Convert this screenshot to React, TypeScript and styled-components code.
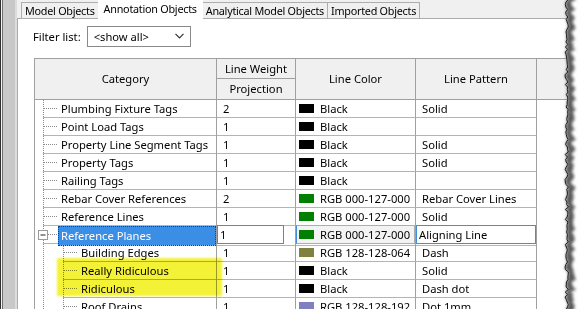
import React from 'react';
import styled, { createGlobalStyle, css } from 'styled-components';

const FONT = `"Noto Sans", "Segoe UI", sans-serif`;
const FS = '11.2px';

const GlobalStyle = createGlobalStyle`
  html, body { margin: 0; padding: 0; background: #fff; }
  body {
    width: 587px; height: 309px; overflow: hidden;
    font-family: ${FONT}; font-size: ${FS}; color: #000;
  }
  #root { width: 587px; height: 309px; }
`;

const Screen = styled.div`
  position: relative;
  display: flex;
  width: 587px;
  height: 309px;
  overflow: hidden;
  background: #fff;
`;

const WindowEdge = styled.div`
  flex: 0 0 17px;
  background: linear-gradient(
    to right,
    #2e2e2e 0 1px,
    #f2f2f2 1px 2px,
    #6e6e6e 2px 3px,
    #c8c8c8 3px 15px,
    #dcdcdc 15px 17px
  );
`;

const Dialog = styled.div`
  flex: 1;
  min-width: 0;
  display: flex;
  flex-direction: column;
  background: #f0f0f0;
`;

const TabStrip = styled.div`
  display: flex;
  align-items: flex-end;
  height: 18px;
  padding-left: 5px;
  position: relative;
  z-index: 1;
`;

const Tab = styled.div<{ $active?: boolean }>`
  box-sizing: border-box;
  height: 16px;
  border: 1px solid #adadad;
  border-bottom: none;
  margin-left: -1px;
  background: #f0f0f0;
  font-size: 10.8px;
  letter-spacing: -0.25px;
  line-height: 15px;
  padding: 0 3px;
  white-space: nowrap;
  ${(p) =>
    p.$active &&
    css`
      height: 19px;
      margin-bottom: -1px;
      border-color: transparent;
      background: #fff;
      line-height: 16px;
      padding: 0 5px;
      position: relative;
      z-index: 2;
    `}
`;

const Panel = styled.div`
  flex: 1;
  background: #fff;
  border-top: 1px solid #adadad;
  border-left: 1px solid #adadad;
  display: flex;
  flex-direction: column;
  padding-top: 7px;
`;

const FilterRow = styled.div`
  display: flex;
  align-items: center;
  gap: 6px;
  padding-left: 15px;
  height: 21px;
`;

const FilterLabel = styled.span`
  padding-bottom: 1px;
`;

const SelectBox = styled.div`
  box-sizing: border-box;
  width: 104px;
  height: 21px;
  border: 1px solid #8a8a8a;
  display: flex;
  align-items: center;
  justify-content: space-between;
  padding: 0 6px 1px 6px;
  background: #fff;
`;

const Table = styled.div`
  margin: 11px 0 0 16px;
  border-top: 1px solid #a0a0a0;
  border-left: 1px solid #a0a0a0;
  display: flex;
  flex-direction: column;
`;

const COLS = '182px 79px 120px 121px 1fr';

const HeaderGrid = styled.div`
  display: grid;
  grid-template-columns: ${COLS};
  grid-template-rows: 20px 21px;
  background: #f0f0f0;
`;

const HeaderCell = styled.div<{ $span?: boolean; $last?: boolean }>`
  box-sizing: border-box;
  display: flex;
  align-items: center;
  justify-content: center;
  border-right: ${(p) => (p.$last ? 'none' : '1px solid #a0a0a0')};
  border-bottom: 1px solid #a0a0a0;
  grid-row: ${(p) => (p.$span ? 'span 2' : 'auto')};
  white-space: nowrap;
  padding-bottom: 1px;
`;

const Row = styled.div`
  display: grid;
  grid-template-columns: ${COLS};
  height: 18px;
`;

const CategoryCell = styled.div`
  display: flex;
  border-right: 1px solid #a0a0a0;
  min-width: 0;
`;

const TreeGuide = styled.svg`
  flex: 0 0 auto;
  display: block;
`;

const CategoryLabel = styled.div<{ $selected?: boolean }>`
  flex: 1;
  box-sizing: border-box;
  display: flex;
  align-items: center;
  padding-left: 3px;
  padding-bottom: 1px;
  border-bottom: 1px solid #b4b4b4;
  white-space: nowrap;
  overflow: hidden;
  ${(p) =>
    p.$selected &&
    css`
      background: #3a8ee6;
      color: #fff;
      outline: 1px dotted #1a3f75;
      outline-offset: -1px;
    `}
`;

const DataCell = styled.div<{ $blank?: boolean }>`
  box-sizing: border-box;
  display: flex;
  align-items: center;
  padding-bottom: 1px;
  border-right: ${(p) => (p.$blank ? 'none' : '1px solid #a0a0a0')};
  border-bottom: ${(p) => (p.$blank ? 'none' : '1px solid #b4b4b4')};
  white-space: nowrap;
  min-width: 0;
`;

const PlainText = styled.span`
  padding-left: 6px;
`;

const EditBox = styled.div<{ $trim?: number }>`
  box-sizing: border-box;
  align-self: flex-start;
  height: 19px;
  margin-top: -1px;
  margin-right: ${(p) => p.$trim ?? 0}px;
  flex: 1;
  border: 1px solid #3f8fe0;
  background: #fff;
  display: flex;
  align-items: center;
  padding: 0 0 1px 2px;
  position: relative;
  z-index: 1;
`;

const ColorWrap = styled.div<{ $button?: boolean }>`
  flex: 1;
  display: flex;
  align-items: center;
  gap: 6px;
  padding-left: 3px;
  height: 100%;
  box-sizing: border-box;
  ${(p) =>
    p.$button &&
    css`
      align-self: flex-start;
      height: 19px;
      margin-top: -1px;
      padding-left: 2px;
      padding-bottom: 1px;
      border: 1px solid #adadad;
      border-left-color: #3f8fe0;
      background: #f3f3f3;
    `}
`;

const Swatch = styled.span<{ $c: string }>`
  width: 15px;
  height: 9px;
  margin-top: 1px;
  background: ${(p) => p.$c};
  flex: 0 0 auto;
`;

const Highlighter = styled.div`
  position: absolute;
  left: 57px;
  top: 258px;
  width: 165px;
  height: 38px;
  background: #f4f236;
  mix-blend-mode: multiply;
  filter: blur(0.8px);
  pointer-events: none;
  z-index: 5;
`;

const TornEdge = styled.svg`
  position: absolute;
  right: 0;
  top: 0;
  z-index: 10;
`;

type RowData = {
  name: string;
  level: 0 | 1;
  weight: string;
  color: string;
  pattern: string;
  selected?: boolean;
  expander?: boolean;
};

const COLOR: Record<string, string> = {
  Black: '#000000',
  'RGB 000-127-000': '#007f00',
  'RGB 128-128-064': '#808040',
  'RGB 128-128-192': '#8080c0',
};

const rows: RowData[] = [
  { name: 'Plumbing Fixture Tags', level: 0, weight: '2', color: 'Black', pattern: 'Solid' },
  { name: 'Point Load Tags', level: 0, weight: '1', color: 'Black', pattern: '' },
  { name: 'Property Line Segment Tags', level: 0, weight: '1', color: 'Black', pattern: 'Solid' },
  { name: 'Property Tags', level: 0, weight: '1', color: 'Black', pattern: 'Solid' },
  { name: 'Railing Tags', level: 0, weight: '1', color: 'Black', pattern: '' },
  { name: 'Rebar Cover References', level: 0, weight: '2', color: 'RGB 000-127-000', pattern: 'Rebar Cover Lines' },
  { name: 'Reference Lines', level: 0, weight: '1', color: 'RGB 000-127-000', pattern: 'Solid' },
  { name: 'Reference Planes', level: 0, weight: '1', color: 'RGB 000-127-000', pattern: 'Aligning Line', selected: true, expander: true },
  { name: 'Building Edges', level: 1, weight: '1', color: 'RGB 128-128-064', pattern: 'Dash' },
  { name: 'Really Ridiculous', level: 1, weight: '1', color: 'Black', pattern: 'Solid' },
  { name: 'Ridiculous', level: 1, weight: '1', color: 'Black', pattern: 'Dash dot' },
  { name: 'Roof Drains', level: 1, weight: '1', color: 'RGB 128-128-192', pattern: 'Dot 1mm' },
];

const DOT = '#8a8a8a';

function Guide({ level, expander }: { level: 0 | 1; expander?: boolean }) {
  const w = level === 0 ? 23 : 43;
  return (
    <TreeGuide width={w} height={18} viewBox={`0 0 ${w} 18`}>
      <line x1={8.5} y1={0} x2={8.5} y2={18} stroke={DOT} strokeDasharray="1 1" />
      {level === 1 && <line x1={28.5} y1={0} x2={28.5} y2={18} stroke={DOT} strokeDasharray="1 1" />}
      <line x1={level === 0 ? 9 : 29} y1={8.5} x2={w} y2={8.5} stroke={DOT} strokeDasharray="1 1" />
      <line x1={level === 0 ? 8 : 28} y1={17.5} x2={w} y2={17.5} stroke="#b4b4b4" />
      {expander && (
        <g>
          <rect x={3.5} y={4.5} width={9} height={9} fill="#fff" stroke="#9a9a9a" />
          <line x1={5.5} y1={9} x2={10.5} y2={9} stroke="#222" />
        </g>
      )}
    </TreeGuide>
  );
}

const edge = (() => {
  let s = 11;
  const rnd = () => {
    s = (s * 9301 + 49297) % 233280;
    return s / 233280;
  };
  const pts: [number, number][] = [];
  for (let y = -3; y <= 314; y += 2.5) pts.push([10 + rnd() * 3.5, y]);
  return pts;
})();

function Torn() {
  const line = edge.map(([x, y]) => `${x.toFixed(1)},${y}`).join(' ');
  const shadow =
    line +
    ' ' +
    [...edge]
      .reverse()
      .map(([x, y], i) => `${(x + 5 + ((i * 7) % 4)).toFixed(1)},${y}`)
      .join(' ');
  return (
    <TornEdge width={32} height={309} viewBox="0 0 32 309">
      <defs>
        <filter id="sh" x="-50%" y="-5%" width="200%" height="110%">
          <feGaussianBlur stdDeviation="1.6" />
        </filter>
      </defs>
      <polygon points={`${line} 40,314 40,-3`} fill="#fff" />
      <polygon points={shadow} fill="#5a5a5a" filter="url(#sh)" />
      <polyline points={line} fill="none" stroke="#1e1e1e" strokeWidth={1} />
    </TornEdge>
  );
}

export default function App() {
  return (
    <>
      <GlobalStyle />
      <Screen>
        <WindowEdge />
        <Dialog>
          <TabStrip>
            <Tab>Model Objects</Tab>
            <Tab $active>Annotation Objects</Tab>
            <Tab>Analytical Model Objects</Tab>
            <Tab>Imported Objects</Tab>
          </TabStrip>
          <Panel>
            <FilterRow>
              <FilterLabel>Filter list:</FilterLabel>
              <SelectBox>
                <span>&lt;show all&gt;</span>
                <svg width="9" height="6" viewBox="0 0 9 6">
                  <polyline points="0.5,0.8 4.5,4.8 8.5,0.8" fill="none" stroke="#333" strokeWidth="1.2" />
                </svg>
              </SelectBox>
            </FilterRow>
            <Table>
              <HeaderGrid>
                <HeaderCell $span>Category</HeaderCell>
                <HeaderCell>Line Weight</HeaderCell>
                <HeaderCell $span>Line Color</HeaderCell>
                <HeaderCell $span>Line Pattern</HeaderCell>
                <HeaderCell $span $last />
                <HeaderCell>Projection</HeaderCell>
              </HeaderGrid>
              {rows.map((r) => (
                <Row key={r.name}>
                  <CategoryCell>
                    <Guide level={r.level} expander={r.expander} />
                    <CategoryLabel $selected={r.selected}>{r.name}</CategoryLabel>
                  </CategoryCell>
                  <DataCell>
                    {r.selected ? <EditBox $trim={11}>{r.weight}</EditBox> : <PlainText>{r.weight}</PlainText>}
                  </DataCell>
                  <DataCell>
                    <ColorWrap $button={r.selected}>
                      <Swatch $c={COLOR[r.color]} />
                      <span>{r.color}</span>
                    </ColorWrap>
                  </DataCell>
                  <DataCell>
                    {r.selected ? <EditBox>{r.pattern}</EditBox> : <PlainText>{r.pattern}</PlainText>}
                  </DataCell>
                  <DataCell $blank />
                </Row>
              ))}
            </Table>
          </Panel>
        </Dialog>
        <Highlighter />
        <Torn />
      </Screen>
    </>
  );
}
